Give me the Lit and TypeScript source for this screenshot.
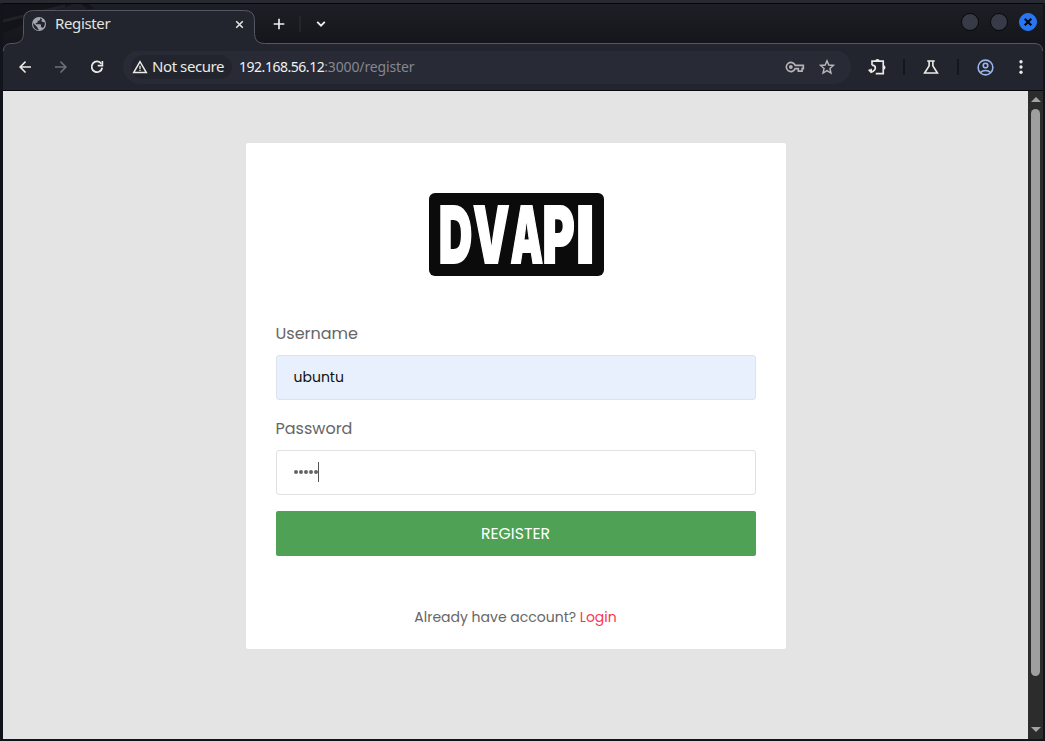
import { LitElement, html, css, svg } from "lit";
import { customElement, property } from "lit/decorators.js";

const icons: Record<string, unknown> = {
  globe: svg`<circle cx="12" cy="12" r="10.500" fill="currentColor"/><path fill="#23252e" d="M3.200 10.500 9.600 16.800v1c0 1 .9 1.800 1.800 1.800v1.600C6.300 20.800 3.200 16.800 3.200 12Zm10.600-7.200v1.600c0 1.200-1 2.200-2.200 2.200H10v2c0 .8-.5 1.300-1.300 1.300H7.200v2h6.500c.8 0 1.300.5 1.300 1.300v3h1c1 0 1.700.6 2 1.400 2.700-2.800 3.300-6.400 2.300-9.500-.8 1.300-2.300.9-3.300.2-1.500-1-1.600-3-.3-4.100Z"/>`,
  close: svg`<path d="m6 6 12 12M18 6 6 18" stroke="currentColor" stroke-width="3" fill="none"/>`,
  closeBold: svg`<path d="m5.500 5.500 13 13M18.500 5.500l-13 13" stroke="currentColor" stroke-width="4.500" fill="none"/>`,
  plus: svg`<path d="M12 4v16M4 12h16" stroke="currentColor" stroke-width="2.500" fill="none"/>`,
  chevron: svg`<path d="m5.500 8.500 6.500 6.500 6.500-6.500" stroke="currentColor" stroke-width="3.200" fill="none"/>`,
  back: svg`<path fill="currentColor" d="M20 10.900H8l5.400-5.400L12 4l-8 8 8 8 1.400-1.500L8 13.100h12z"/>`,
  forward: svg`<path fill="currentColor" d="M4 10.900h12l-5.400-5.400L12 4l8 8-8 8-1.400-1.500 5.400-5.400H4z"/>`,
  reload: svg`<path fill="none" stroke="currentColor" stroke-width="2.300" d="M17.800 7.600A7.100 7.100 0 1 0 19 13"/><path fill="currentColor" d="M20.300 4v7.200H13V9h5.100V4z"/>`,
  warning: svg`<path fill="none" stroke="currentColor" stroke-width="2.200" d="M12 4 2.500 20.300h19z"/><path fill="currentColor" d="M11 10h2v5h-2zm0 6h2v2h-2z"/>`,
  key: svg`<path fill="none" stroke="currentColor" stroke-width="2" d="M12.200 10a5.500 5.500 0 1 0 0 4H16v3h4.500v-3H22v-4z"/><circle cx="7" cy="12" r="2.300" fill="currentColor"/>`,
  star: svg`<path fill="none" stroke="currentColor" stroke-width="1.900" d="m12 3.700 2.400 5.700 6.200.5-4.700 4.100 1.400 6.100L12 16.900l-5.300 3.200L8.100 14 3.400 9.900l6.200-.5z"/>`,
  puzzle: svg`<path fill="none" stroke="currentColor" stroke-width="2" d="M6 9.800V5H19.500v15H10.500M6 9.800C8.500 9.800 10 11.200 10 13.200S8.200 17 5 18.300L2 15.200M5 14v4"/><path fill="currentColor" d="M9.800 5a2.700 2.700 0 0 1 5.400 0zM19.500 9.800a2.700 2.700 0 0 1 0 5.400z"/>`,
  flask: svg`<path fill="none" stroke="currentColor" stroke-width="2.200" d="M7 4h10M9.500 4v6.500L3.500 20h17l-6-9.500V4"/>`,
  person: svg`<g fill="none" stroke="currentColor" stroke-width="2"><circle cx="12" cy="12" r="9.300"/><circle cx="12" cy="9.500" r="2.900"/><path d="M5.500 18.500c3.400-3.500 9.600-3.500 13 0"/></g>`,
  more: svg`<g fill="currentColor"><circle cx="12" cy="5" r="2.200"/><circle cx="12" cy="12" r="2.200"/><circle cx="12" cy="19" r="2.200"/></g>`,
};

@customElement("ui-icon")
class UiIcon extends LitElement {
  @property() name = "";
  static styles = css`
    :host { display: block; width: 18px; height: 18px; flex: none; }
    svg { display: block; width: 100%; height: 100%; }
  `;
  render() {
    return html`<svg viewBox="0 0 24 24" aria-hidden="true">${icons[this.name]}</svg>`;
  }
}

@customElement("browser-tabs")
class BrowserTabs extends LitElement {
  static styles = css`
    :host { display: block; height: 47px; position: relative; background: linear-gradient(#1d1f26, #15161b 39px); font-family: "Noto Sans", sans-serif; }
    .outline { position: absolute; inset: 0; display: block; }
    .row { position: relative; display: flex; align-items: center; height: 40px; color: #eceef0; }
    .tab { display: flex; align-items: center; width: 231px; margin-left: 21px; padding: 0 9px 0 7px; box-sizing: border-box; color: #e2e4df; }
    .globe { width: 16px; height: 16px; color: #a1a5b0; }
    .title { flex: 1; margin-left: 8px; padding-bottom: 2px; font-size: 15px; line-height: 20px; letter-spacing: -0.36px; }
    .close { width: 13px; height: 13px; }
    .plus { width: 16px; height: 16px; margin-left: 16px; }
    .sep { width: 2px; height: 16px; background: #23252e; margin: 0 12px; }
    .chevron { width: 14px; height: 14px; margin-left: 1px; }
    .controls { display: flex; gap: 11px; margin: 0 6px 4px auto; }
    .dot { box-sizing: border-box; width: 18px; height: 18px; border-radius: 50%; background: #373b47; border: 1px solid #07080b; }
    .quit { background: #2777f5; border-color: #2777f5; color: #05070c; display: grid; place-items: center; }
    .quit ui-icon { width: 12px; height: 12px; }
  `;
  render() {
    return html`
      <svg class="outline" width="1040" height="47" viewBox="0 0 1040 47">
        <path d="M0 0H70L0 29ZM78 0h8l5 5h-7Z" fill="#101116" opacity=".65"/>
        <path d="M0 17 62 2" stroke="#202229" stroke-width="3"/>
        <path fill="#23252e" d="M0 47C0 42 3 39.500 9 39.500 17 39.500 20.500 36 20.500 29V16.500Q20.500 6.500 30.500 6.500H241.500Q251.500 6.500 251.500 16.500V29.500Q251.500 39.500 261.500 39.500H1031Q1039.500 39.500 1039.500 47Z"/>
        <path fill="none" stroke="#555861" d="M.5 47C.5 42 3 39.500 9 39.500 17 39.500 20.500 36 20.500 29V16.500Q20.500 6.500 30.500 6.500H241.500Q251.500 6.500 251.500 16.500V29.500Q251.500 39.500 261.500 39.500H1031Q1039.500 39.500 1039.500 47"/>
      </svg>
      <div class="row">
        <div class="tab">
          <ui-icon class="globe" name="globe"></ui-icon>
          <span class="title">Register</span>
          <ui-icon class="close" name="close"></ui-icon>
        </div>
        <ui-icon class="plus" name="plus"></ui-icon>
        <span class="sep"></span>
        <ui-icon class="chevron" name="chevron"></ui-icon>
        <div class="controls">
          <span class="dot"></span><span class="dot"></span>
          <span class="dot quit"><ui-icon name="closeBold"></ui-icon></span>
        </div>
      </div>`;
  }
}

@customElement("browser-toolbar")
class BrowserToolbar extends LitElement {
  static styles = css`
    :host { display: flex; align-items: center; height: 40px; box-sizing: border-box; padding: 0 13px 7px; background: #23252e; border-bottom: 1px solid #08090c; color: #e9ebe6; font: 15px/20px "Noto Sans", sans-serif; }
    .nav { display: flex; gap: 18px; }
    .dim { color: #6e7079; }
    .address { display: flex; flex: none; align-items: center; box-sizing: border-box; width: 728px; height: 34px; margin-left: 17px; padding: 0 15px 0 8px; border-radius: 17px; background: #282a36; }
    .chip { display: flex; align-items: center; box-sizing: border-box; width: 101px; height: 24px; border-radius: 12px; padding-left: 1px; background: #23252e; }
    .chip ui-icon { width: 16px; height: 16px; margin-right: 4px; }
    .chip span { letter-spacing: -0.42px; white-space: nowrap; padding-bottom: 2px; }
    .url { flex: 1; margin-left: 7px; font-size: 14px; letter-spacing: -0.14px; color: #85878e; white-space: nowrap; }
    .url b { font-weight: 400; letter-spacing: -0.47px; color: #f0f1f1; }
    .key { width: 20px; height: 20px; color: #b4b4b5; }
    .star { margin-left: 13px; color: #b8b8b8; }
    .puzzle { margin-left: 16px; width: 20px; height: 20px; }
    .sep { width: 2px; height: 16px; background: #15161d; }
    .a { margin: 0 17px 0 16px; }
    .b { margin: 0 17px; }
    .person { width: 19px; height: 19px; color: #99b5ec; }
    .more { margin-left: auto; }
  `;
  render() {
    return html`
      <div class="nav">
        <ui-icon name="back"></ui-icon>
        <ui-icon class="dim" name="forward"></ui-icon>
        <ui-icon name="reload"></ui-icon>
      </div>
      <div class="address">
        <div class="chip"><ui-icon name="warning"></ui-icon><span>Not secure</span></div>
        <div class="url"><b>192.168.56.12</b>:3000/register</div>
        <ui-icon class="key" name="key"></ui-icon>
        <ui-icon class="star" name="star"></ui-icon>
      </div>
      <ui-icon class="puzzle" name="puzzle"></ui-icon>
      <span class="sep a"></span>
      <ui-icon name="flask"></ui-icon>
      <span class="sep b"></span>
      <ui-icon class="person" name="person"></ui-icon>
      <ui-icon class="more" name="more"></ui-icon>`;
  }
}

@customElement("register-card")
class RegisterCard extends LitElement {
  static styles = css`
    :host { display: flex; flex-direction: column; box-sizing: border-box; width: 540px; height: 506px; padding: 50px 30px 0; background: #fff; border-radius: 2px; color: #666; font: 16px/24px Poppins, sans-serif; }
    .logo { display: block; width: 175px; height: 83px; margin: 0 auto 46px 153px; border-radius: 6px; background: #0b0b0b; overflow: visible; }
    .logo text { font: 900 60px Inter, sans-serif; fill: #fff; stroke: #fff; stroke-linejoin: miter; }
    .label { display: block; height: 24px; margin-bottom: 9px; }
    .field { display: flex; align-items: center; box-sizing: border-box; height: 45px; margin-bottom: 16px; padding: 0 17px; border: 1px solid #e1e1e1; border-radius: 3px; font-size: 14px; }
    .filled { background: #e8f0fe; color: #111; border-color: #dce3ee; margin-bottom: 17px; padding-bottom: 2px; }
    .bullets { display: flex; gap: 1px; }
    .bullets i { width: 4px; height: 4px; border-radius: 50%; background: #666; }
    .caret { width: 1px; height: 20px; background: #555; }
    .secret { padding-bottom: 1px; }
    .submit { display: flex; align-items: center; justify-content: center; height: 45px; border-radius: 2px; background: #4fa155; color: #fff; font-size: 15.700px; }
    .footer { margin-top: 49px; text-align: center; font-size: 14px; }
    .footer a { color: #fa3650; }
  `;
  render() {
    return html`
      <svg class="logo" viewBox="0 0 175 83" role="img" aria-label="DVAPI">
        <text transform="translate(0 69.700) scale(.7 1.300)" y="0" stroke-width="1.500"><tspan x="14" textLength="48" lengthAdjust="spacingAndGlyphs">D</tspan><tspan x="63" textLength="52" lengthAdjust="spacingAndGlyphs">V</tspan><tspan x="116.500" textLength="46.500" lengthAdjust="spacingAndGlyphs">A</tspan><tspan x="162" textLength="46" lengthAdjust="spacingAndGlyphs">P</tspan><tspan x="210" textLength="26" lengthAdjust="spacingAndGlyphs">I</tspan></text>
      </svg>
      <span class="label">Username</span>
      <div class="field filled">ubuntu</div>
      <span class="label">Password</span>
      <div class="field secret">
        <span class="bullets"><i></i><i></i><i></i><i></i><i></i></span><span class="caret"></span>
      </div>
      <div class="submit">REGISTER</div>
      <div class="footer">Already have account? <a>Login</a></div>`;
  }
}

@customElement("app-root")
class AppRoot extends LitElement {
  static styles = css`
    :host { display: flex; flex-direction: column; box-sizing: border-box; width: 1045px; height: 741px; padding: 0 2px 2px 3px; background: #11141b; border-top: 3px solid #282a31; overflow: hidden; }
    .window { display: flex; flex-direction: column; flex: 1; border-top: 1px solid #050609; width: 1040px; }
    .view { display: flex; height: 648px; }
    .page { flex: 1; display: flex; justify-content: center; align-items: flex-start; padding-top: 52px; background: #e4e4e4; }
    .scroll { display: flex; flex-direction: column; align-items: center; width: 15px; box-sizing: border-box; padding: 6px 0 7px; background: #2c2c2c; }
    .arrow { border: 5px solid transparent; width: 0; height: 0; }
    .up { border-top: 0; border-bottom-color: #a3a3a3; }
    .down { border-bottom: 0; border-top-color: #a3a3a3; margin-top: auto; }
    .thumb { width: 9px; height: 567px; margin-top: 7px; border-radius: 4.500px; background: #9f9f9f; }
  `;
  render() {
    return html`
      <div class="window">
        <browser-tabs></browser-tabs>
        <browser-toolbar></browser-toolbar>
        <div class="view">
          <main class="page"><register-card></register-card></main>
          <div class="scroll"><span class="arrow up"></span><span class="thumb"></span><span class="arrow down"></span></div>
        </div>
      </div>`;
  }
}
